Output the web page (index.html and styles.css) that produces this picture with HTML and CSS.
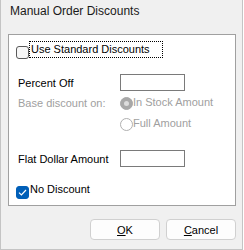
FILE: index.html
```html
<!DOCTYPE html>
<html lang="en">
<head>
    <meta charset="UTF-8">
    <title>Manual Order Discounts</title>
    <link rel="stylesheet" href="styles.css">
</head>
<body>
    <div class="window">
        <div class="title">Manual Order Discounts</div>

        <div class="panel">
            <div class="row check-row first">
                <span class="checkbox"></span>
                <span class="check-label focus">Use Standard Discounts</span>
            </div>

            <div class="row field-row percent">
                <span class="label">Percent Off</span>
                <span class="input"></span>
            </div>

            <div class="row radio-row base">
                <span class="label disabled">Base discount on:</span>
                <span class="radio selected"></span>
                <span class="radio-label disabled">In Stock Amount</span>
            </div>

            <div class="row radio-row full">
                <span class="label"></span>
                <span class="radio"></span>
                <span class="radio-label disabled">Full Amount</span>
            </div>

            <div class="row field-row flat">
                <span class="label">Flat Dollar Amount</span>
                <span class="input"></span>
            </div>

            <div class="row check-row last">
                <span class="checkbox checked">
                    <svg width="9" height="7" viewBox="0 0 9 7"><path d="M1 3.6 L3.4 6 L8 1" fill="none" stroke="#fff" stroke-width="1.2"/></svg>
                </span>
                <span class="check-label">No Discount</span>
            </div>
        </div>

        <div class="buttons">
            <button class="btn"><u>O</u>K</button>
            <button class="btn"><u>C</u>ancel</button>
        </div>
    </div>
</body>
</html>
```

FILE: styles.css
```css
* {
    box-sizing: border-box;
    margin: 0;
    padding: 0;
}

body {
    font-family: 'Liberation Sans', Arial, sans-serif;
    font-size: 11px;
    background: #ffffff;
}

.window {
    width: 243px;
    height: 250px;
    background: #f0f0f0;
    border-left: 1px solid #c4c4c4;
    border-right: 1px solid #c4c4c4;
    border-bottom: 1px solid #c4c4c4;
}

.title {
    font-size: 12px;
    line-height: 14px;
    color: #1a1a1a;
    padding: 4px 0 16px 9px;
}

.panel {
    margin: 0 6px 0 7px;
    background: #fff;
    border: 1px solid #a0a0a0;
    padding: 6px 0 6px 0;
}

.row {
    display: flex;
}

.check-row {
    height: 17px;
    padding-left: 7px;
    align-items: flex-start;
}

.check-row.last {
    margin-top: 15px;
}

.checkbox {
    width: 13px;
    height: 13px;
    margin-top: 5px;
    border: 1px solid #5a5a5a;
    border-radius: 3px;
    background: #f7f7f7;
    display: flex;
    align-items: center;
    justify-content: center;
}

.check-row.last .checkbox {
    margin-top: 4px;
}

.checkbox.checked {
    background: #005fb8;
    border-color: #005fb8;
}

.check-label {
    color: #000;
    line-height: 14px;
    padding: 0 1px;
}

.focus {
    border: 1px dotted #000;
    width: 134px;
    height: 17px;
    line-height: 15px;
}

.field-row {
    height: 17px;
    padding-left: 9px;
    align-items: center;
}

.percent {
    margin-top: 16px;
}

.flat {
    margin-top: 19px;
}

.label {
    width: 102px;
    color: #000;
}

.disabled {
    color: #a0a0a0;
}

.input {
    width: 65px;
    height: 17px;
    background: #fff;
    border: 1px solid #7a7a7a;
}

.radio-row {
    height: 14px;
    padding-left: 9px;
    align-items: flex-start;
}

.radio-row .label {
    line-height: 12px;
    margin-top: 1px;
}

.base {
    margin-top: 5px;
}

.full {
    margin-top: 7px;
}

.radio {
    width: 13px;
    height: 13px;
    margin-top: 1px;
    border-radius: 50%;
    border: 1px solid #b0b0b0;
    background: #fff;
    display: flex;
    align-items: center;
    justify-content: center;
}

.radio.selected {
    background: #a8a8a8;
    border-color: #a8a8a8;
}

.radio.selected::after {
    content: "";
    width: 5px;
    height: 5px;
    border-radius: 50%;
    background: #dcdcdc;
}

.radio-label {
    line-height: 12px;
}

.buttons {
    display: flex;
    justify-content: flex-end;
    gap: 6px;
    padding-right: 6px;
    margin-top: 13px;
}

.btn {
    width: 70px;
    height: 21px;
    font-family: 'Liberation Sans', Arial, sans-serif;
    font-size: 11px;
    color: #000;
    background: #fdfdfd;
    border: 1px solid #d0d0d0;
    border-radius: 4px;
}
```
